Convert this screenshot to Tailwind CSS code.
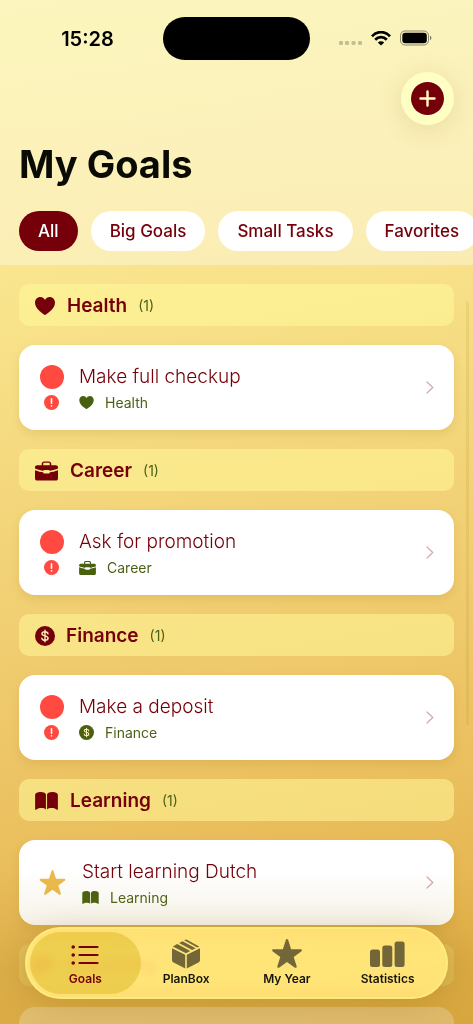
<!DOCTYPE html>
<html lang="en">
<head>
<meta charset="utf-8">
<meta name="viewport" content="width=device-width, initial-scale=1">
<title>My Goals</title>
<script src="https://cdn.jsdelivr.net/npm/@tailwindcss/browser@4"></script>
</head>
<body class="font-['Inter','Liberation_Sans',sans-serif] text-[#75000a]">
<svg class="hidden" aria-hidden="true">
  <symbol id="heart" viewBox="0 0 20 18"><path d="M10 18C9.600 18 0 12.500 0 5.800 0 2.400 2.300 0 5.300 0 7.400 0 9.100 1.100 10 2.900 10.900 1.100 12.600 0 14.700 0 17.700 0 20 2.400 20 5.800 20 12.500 10.400 18 10 18Z"/></symbol>
  <symbol id="briefcase" viewBox="0 0 24 20"><path fill-rule="evenodd" d="M7 4V2.600C7 .9 7.900 0 9.600 0h4.800C16.100 0 17 .9 17 2.600V4h4.500C23.200 4 24 4.800 24 6.400V7.500C20 9 17.500 9.500 15.500 9.700 15.200 9.100 14.700 8.900 14 8.900H10C9.300 8.900 8.800 9.100 8.500 9.700 6.500 9.500 4 9 0 7.500V6.400C0 4.800.8 4 2.500 4ZM8.600 4h6.800V2.700c0-.8-.4-1.200-1.200-1.200H9.800c-.8 0-1.200.4-1.200 1.200Z"/><path d="M0 9.100C3.500 10.400 6 11 8.400 11.200 8.600 12.200 9.100 12.600 10 12.600h4c.9 0 1.400-.4 1.600-1.400C18 11 20.500 10.400 24 9.100V17.500c0 1.700-.8 2.500-2.500 2.500h-19C.8 20 0 19.200 0 17.500Z"/></symbol>
  <symbol id="dollar" viewBox="0 0 20 20"><circle cx="10" cy="10" r="10"/><path d="M10 4.200v11.600M13 7.800C12.800 6.500 11.600 5.700 10 5.700 8.200 5.700 7 6.500 7 7.800 7 10.600 13.100 9 13.100 12.100 13.100 13.500 11.800 14.300 10 14.300 8.200 14.300 7 13.500 6.800 12.100" fill="none" stroke="#fdf0b8" stroke-width="1.400" stroke-linecap="round"/></symbol>
  <symbol id="book" viewBox="0 0 24 19"><path d="M11.400 2.400V18.600C10.300 17.500 8.700 17 6.400 17 4 17 2.400 17.600 1 18.700.4 19 0 18.700 0 18.200V3C0 1.400 2.600 0 6 0c2.600 0 4.600.9 5.400 2.400ZM12.600 2.400V18.600C13.700 17.500 15.300 17 17.600 17c2.400 0 4 .6 5.400 1.700.6.300 1 0 1-.5V3C24 1.400 21.400 0 18 0c-2.600 0-4.600.9-5.400 2.400Z"/></symbol>
  <symbol id="star" viewBox="0 0 30 29"><path d="M13.800 1.100C14.300-.3 15.700-.3 16.200 1.100L19.100 10.200H28.400C30 10.200 30.400 11.600 29.200 12.500L21.700 18.100 24.600 27.100C25 28.500 23.800 29.400 22.600 28.500L15 22.900 7.400 28.500C6.200 29.400 5 28.500 5.400 27.100L8.300 18.100.8 12.500C-.4 11.600 0 10.200 1.600 10.200H10.900Z"/></symbol>
  <symbol id="alert" viewBox="0 0 14 14"><circle cx="7" cy="7" r="7"/><path d="M7 3.500V7.600M7 10v.3" stroke="#fff" stroke-width="1.500" stroke-linecap="round"/></symbol>
  <symbol id="chevron" viewBox="0 0 8 13"><path d="M1 1 6.800 6.500 1 12" fill="none" stroke="currentColor" stroke-width="1.200" stroke-linecap="round" stroke-linejoin="round"/></symbol>
  <symbol id="palette" viewBox="0 0 24 22"><path d="M12 0C5 0 0 5 0 11s5 11 11 11c3 0 2-3 3-5 2-3 10 0 10-7C24 4 19 0 12 0Z"/></symbol>
</svg>

<div class="relative flex h-screen flex-col overflow-hidden bg-linear-[170deg,#f9f08f_0%,#f9e68f_24%,#f0cc6f_60%,#e2ad46_100%]">

  <header class="flex-none bg-white/35 bg-linear-to-b from-white/10 to-transparent pb-[14px]">
    <div class="grid h-[72px] grid-cols-[1fr_147px_1fr] items-center pt-1">
      <time class="pt-0.5 pl-3 text-center text-[20px] leading-6 font-semibold text-black">15:28</time>
      <div class="h-[43px] rounded-full bg-black"></div>
      <div class="flex items-center gap-[9px] pl-7 text-black">
        <svg class="mt-[9px] h-1 w-6" viewBox="0 0 24 4" fill="#000" fill-opacity=".22"><rect x="1" width="4" height="4" rx="1.300"/><rect x="7" width="4" height="4" rx="1.300"/><rect x="13.500" width="4" height="4" rx="1.300"/><rect x="20" width="4" height="4" rx="1.300"/></svg>
        <svg class="h-[15px] w-5" viewBox="0 0 20 15" fill="none" stroke="#000" stroke-width="2.700"><path d="M1 5.300C6-.3 14-.3 19 5.300M4.200 8.700c3.300-3.500 8.300-3.500 11.600 0"/><path d="M10 14.500 6.800 11.400c1.800-1.700 4.600-1.700 6.400 0Z" fill="#000" stroke="none"/></svg>
        <svg class="h-4 w-8" viewBox="0 0 32 16"><rect x=".5" y="1" width="28" height="14" rx="4.500" fill="none" stroke="#000" stroke-opacity=".45"/><rect x="2.300" y="2.800" width="24.500" height="10.400" rx="3"/><path d="M30 5.800c1.800.6 1.800 3.800 0 4.400Z" fill-opacity=".5"/></svg>
      </div>
    </div>
    <div class="flex justify-end pr-[19px]">
      <button aria-label="Add goal" class="grid size-[53px] place-items-center rounded-full bg-[#ffffc4] shadow-[0_4px_28px_rgba(120,90,0,0.14)]">
        <svg class="size-[33px]" viewBox="0 0 33 33"><circle cx="16.500" cy="16.500" r="16.500" fill="#75000a"/><path d="M16.500 9.500v14M9.500 16.500h14" stroke="#ffffc4" stroke-width="2.400" stroke-linecap="round"/></svg>
      </button>
    </div>
    <h1 class="mt-4 pl-[19px] text-[38px] leading-[46px] font-bold text-[#0b0b05]">My Goals</h1>
    <div class="mt-6 flex gap-[13px] overflow-hidden pl-[19px] text-[17px] leading-6 font-medium">
      <button class="flex-none rounded-full bg-[#75000a] px-[19px] py-2 text-white">All</button>
      <button class="flex-none rounded-full bg-white px-[19px] py-2">Big Goals</button>
      <button class="flex-none rounded-full bg-white px-[19px] py-2">Small Tasks</button>
      <button class="flex-none rounded-full bg-white px-[19px] py-2">Favorites</button>
    </div>
  </header>

  <main class="flex min-h-0 flex-1 flex-col gap-[19px] overflow-hidden px-[19px] pt-[19px]">
    <h2 class="flex h-[42px] flex-none items-center rounded-[10px] bg-[#fff799]/60 pt-0.5 pl-4 text-[19px] leading-6 font-semibold"><svg class="mr-3 h-[18px] w-5 fill-current"><use href="#heart"/></svg>Health<span class="ml-[11px] text-[14px] font-normal text-[#4b6118]">(1)</span></h2>
    <a href="#health" class="flex h-[85px] flex-none items-center rounded-2xl bg-white pr-5 pl-5 shadow-[0_4px_10px_rgba(140,90,0,0.13)]">
      <span class="flex w-[25px] flex-none flex-col items-center gap-[6px]"><span class="size-6 rounded-full bg-[#ff4941]"></span><svg class="size-[15px] fill-[#ff4941]"><use href="#alert"/></svg></span>
      <span class="ml-[15px] flex-1"><span class="block text-[19px] leading-7 font-light">Make full checkup</span><span class="mt-0.5 flex items-center text-[14px] leading-5 text-[#4b6118]"><svg class="mr-[11px] h-[13px] w-[15px] fill-[#48600f]"><use href="#heart"/></svg>Health</span></span>
      <svg class="h-[13px] w-2 text-[#d3a9ab]"><use href="#chevron"/></svg>
    </a>

    <h2 class="flex h-[42px] flex-none items-center rounded-[10px] bg-[#fff799]/55 pt-0.5 pl-4 text-[19px] leading-6 font-semibold"><svg class="mr-3 h-5 w-[23px] fill-current"><use href="#briefcase"/></svg>Career<span class="ml-[11px] text-[14px] font-normal text-[#4b6118]">(1)</span></h2>
    <a href="#career" class="flex h-[85px] flex-none items-center rounded-2xl bg-white pr-5 pl-5 shadow-[0_4px_10px_rgba(140,90,0,0.13)]">
      <span class="flex w-[25px] flex-none flex-col items-center gap-[6px]"><span class="size-6 rounded-full bg-[#ff4941]"></span><svg class="size-[15px] fill-[#ff4941]"><use href="#alert"/></svg></span>
      <span class="ml-[15px] flex-1"><span class="block text-[19px] leading-7 font-light">Ask for promotion</span><span class="mt-0.5 flex items-center text-[14px] leading-5 text-[#4b6118]"><svg class="mr-[11px] h-[14px] w-[17px] fill-[#48600f]"><use href="#briefcase"/></svg>Career</span></span>
      <svg class="h-[13px] w-2 text-[#d3a9ab]"><use href="#chevron"/></svg>
    </a>

    <h2 class="flex h-[42px] flex-none items-center rounded-[10px] bg-[#fff799]/55 pt-0.5 pl-4 text-[19px] leading-6 font-semibold"><svg class="mr-[11px] size-5 fill-current"><use href="#dollar"/></svg>Finance<span class="ml-[11px] text-[14px] font-normal text-[#4b6118]">(1)</span></h2>
    <a href="#finance" class="flex h-[85px] flex-none items-center rounded-2xl bg-white pr-5 pl-5 shadow-[0_4px_10px_rgba(140,90,0,0.13)]">
      <span class="flex w-[25px] flex-none flex-col items-center gap-[6px]"><span class="size-6 rounded-full bg-[#ff4941]"></span><svg class="size-[15px] fill-[#ff4941]"><use href="#alert"/></svg></span>
      <span class="ml-[15px] flex-1"><span class="block text-[19px] leading-7 font-light">Make a deposit</span><span class="mt-0.5 flex items-center text-[14px] leading-5 text-[#4b6118]"><svg class="mr-[11px] size-[15px] fill-[#48600f]"><use href="#dollar"/></svg>Finance</span></span>
      <svg class="h-[13px] w-2 text-[#d3a9ab]"><use href="#chevron"/></svg>
    </a>

    <h2 class="flex h-[42px] flex-none items-center rounded-[10px] bg-[#fff799]/55 pt-0.5 pl-4 text-[19px] leading-6 font-semibold"><svg class="mr-3 h-[18px] w-[23px] fill-current"><use href="#book"/></svg>Learning<span class="ml-[11px] text-[14px] font-normal text-[#4b6118]">(1)</span></h2>
    <a href="#learning" class="flex h-[85px] flex-none items-center rounded-2xl bg-white pr-5 pl-5 shadow-[0_4px_10px_rgba(140,90,0,0.13)]">
      <svg class="h-[25px] w-[27px] flex-none fill-[#ebb94c]"><use href="#star"/></svg>
      <span class="ml-4 flex-1"><span class="block text-[19px] leading-7 font-light">Start learning Dutch</span><span class="mt-0.5 flex items-center text-[14px] leading-5 text-[#4b6118]"><svg class="mr-[11px] h-[13px] w-[17px] fill-[#48600f]"><use href="#book"/></svg>Learning</span></span>
      <svg class="h-[13px] w-2 text-[#d3a9ab]"><use href="#chevron"/></svg>
    </a>

    <h2 class="flex h-[42px] flex-none items-center rounded-[10px] bg-[#fff799]/25 pt-0.5 pl-3 text-[19px] leading-6 font-semibold text-[#f0503c]/80"><svg class="mr-3 h-[22px] w-6 fill-current"><use href="#palette"/></svg>Creativity</h2>
    <div class="mt-0.5 h-[85px] flex-none rounded-2xl bg-white/30"></div>
  </main>

  <div class="pointer-events-none absolute top-[301px] right-1 h-[424px] w-[3px] rounded-full bg-[#b08a20]/15"></div>
  <div class="pointer-events-none absolute inset-x-0 bottom-0 h-[154px] bg-linear-to-b from-transparent via-[#b08a20]/20 via-65% to-[#b08a20]/20"></div>

  <nav class="absolute inset-x-[25px] bottom-[25px] grid h-[72px] grid-cols-4 rounded-full border-2 border-[#ffee80]/70 bg-[#ffe67e]/78 px-2 text-[12px] leading-4 font-semibold text-[#17160a] shadow-[0_4px_30px_rgba(110,80,0,0.22)] backdrop-blur-[3px] backdrop-brightness-120">
    <button aria-current="page" class="relative flex flex-col items-center pt-[14px] text-[#75000a]">
      <span class="absolute -inset-x-[5px] inset-y-[3px] rounded-full bg-[#d9b41c]/45"></span>
      <svg class="relative h-6 w-7" viewBox="0 0 28 24" fill="none" stroke="currentColor" stroke-linecap="round"><path d="M8.500 4h18M8.500 12h18M8.500 20h18" stroke-width="2.200"/><path d="M2.200 4h.01M2.200 12h.01M2.200 20h.01" stroke-width="3.600"/></svg>
      <span class="relative mt-1">Goals</span>
    </button>
    <button class="flex flex-col items-center pt-[10px]">
      <svg class="h-[30px] w-7 fill-[#736739]" viewBox="0 0 28 30"><path d="M0 9.200 13.200 15.800V29.600L1.600 23.400C.5 22.800 0 22.200 0 21ZM28 9.200 14.800 15.800V29.600L26.400 23.400C27.500 22.800 28 22.200 28 21ZM.8 7.500 5.200 5 18.300 12 14 14.200ZM7 4 10.500 2.200 23.600 9.200 20.100 11ZM12.200 1.200C13.600.3 14.400.3 15.800 1.200L27.200 7.500 25.300 8.400Z"/></svg>
      <span class="mt-0.5">PlanBox</span>
    </button>
    <button class="flex flex-col items-center pt-[10px]">
      <svg class="h-[29px] w-[30px] fill-[#736739]"><use href="#star"/></svg>
      <span class="mt-[3px]">My Year</span>
    </button>
    <button class="flex flex-col items-center pt-[12px]">
      <svg class="h-[26px] w-[35px] fill-[#736739]" viewBox="0 0 35 26"><rect y="8.500" width="10" height="17.500" rx="2.500"/><rect x="12.300" y="4.500" width="10" height="21.500" rx="2.500"/><rect x="24.600" y=".5" width="10" height="25.500" rx="2.500"/></svg>
      <span class="mt-1">Statistics</span>
    </button>
  </nav>
</div>
</body>
</html>
